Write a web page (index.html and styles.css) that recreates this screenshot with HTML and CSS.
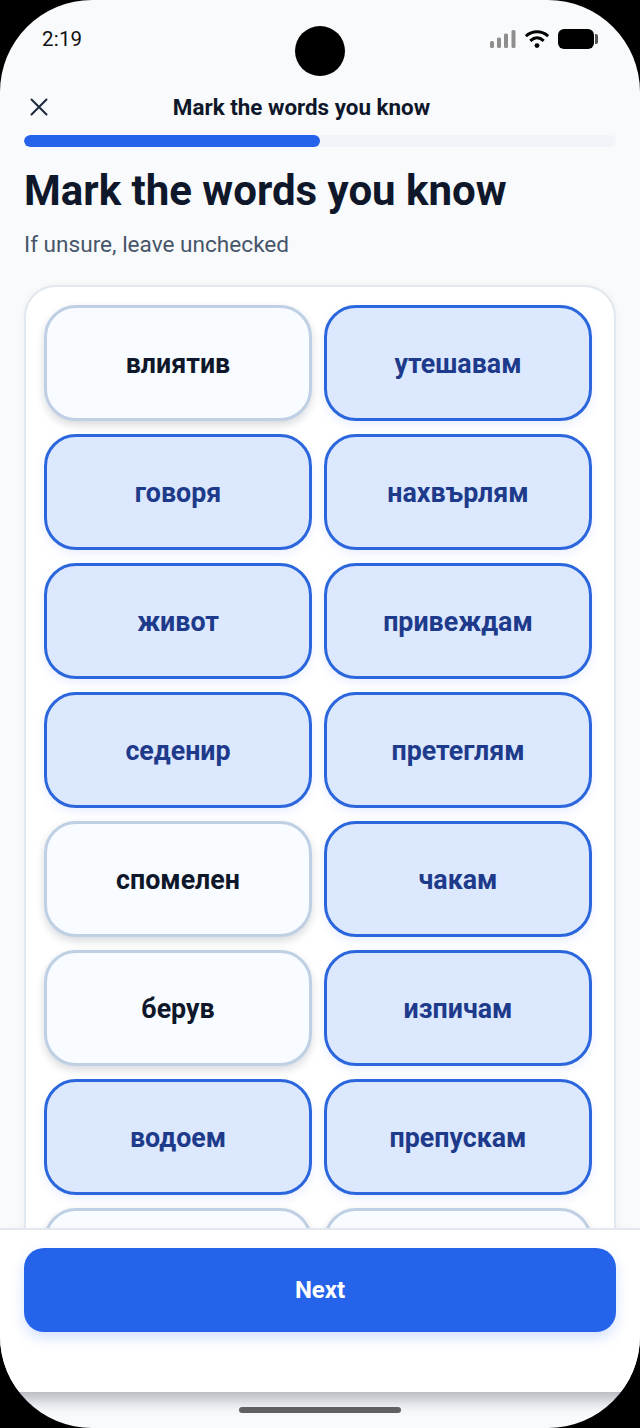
FILE: index.html
```html
<!DOCTYPE html>
<html lang="bg">
<head>
<meta charset="utf-8">
<title>Mark the words you know</title>
<link rel="stylesheet" href="styles.css">
</head>
<body>
<div class="phone">
  <div class="camera"></div>
  <div class="status">
    <span class="time">2:19</span>
    <div class="status-icons">
      <svg class="signal" width="26" height="18" viewBox="0 0 26 18"><rect x="0" y="11" width="4" height="7" rx="1.6"/><rect x="7" y="7.5" width="4" height="10.5" rx="1.6"/><rect x="14" y="3.5" width="4" height="14.5" rx="1.6"/><rect x="21.500" y="0" width="4" height="18" rx="1.6"/></svg>
      <svg class="wifi" width="24" height="18" viewBox="0 0 24 18" fill="none" stroke="#000" stroke-width="3"><path d="M.8 6.200C7.300 .3 16.700 .3 23.200 6.200"/><path d="M5.300 10.800C9.500 7 14.500 7 18.700 10.800"/><circle cx="12" cy="15.600" r="2.400" fill="#000" stroke="none"/></svg>
      <div class="battery"><div class="battery-body"></div><div class="battery-cap"></div></div>
    </div>
  </div>
  <header class="topbar">
    <svg class="close" width="18" height="18" viewBox="0 0 18 18" fill="none" stroke="#1e293b" stroke-width="2" stroke-linecap="round"><path d="M1.500 1.500 16.500 16.500M16.500 1.500 1.500 16.500"/></svg>
    <span class="topbar-title">Mark the words you know</span>
  </header>
  <div class="progress"><div class="progress-fill" style="width:50%"></div></div>
  <main class="content">
    <h1 class="title">Mark the words you know</h1>
    <p class="subtitle">If unsure, leave unchecked</p>
    <section class="card">
      <button class="chip">влиятив</button>
      <button class="chip on">утешавам</button>
      <button class="chip on">говоря</button>
      <button class="chip on">нахвърлям</button>
      <button class="chip on">живот</button>
      <button class="chip on">привеждам</button>
      <button class="chip on">седенир</button>
      <button class="chip on">претеглям</button>
      <button class="chip">спомелен</button>
      <button class="chip on">чакам</button>
      <button class="chip">берув</button>
      <button class="chip on">изпичам</button>
      <button class="chip on">водоем</button>
      <button class="chip on">препускам</button>
      <button class="chip"></button>
      <button class="chip"></button>
    </section>
  </main>
  <footer class="footer"><button class="next">Next</button></footer>
  <div class="home"><div class="home-bar"></div></div>
</div>
</body>
</html>
```
FILE: styles.css
```css
* { box-sizing: border-box; }
html, body { margin: 0; height: 100%; background: #000; }
body { font-family: Roboto, "Noto Sans", sans-serif; color: #0f172a; }
.phone {
  position: relative;
  width: 640px;
  height: 1428px;
  background: #f8fafc;
  border-radius: 92px;
  overflow: hidden;
  display: flex;
  flex-direction: column;
}
.camera {
  position: absolute;
  top: 26px;
  left: 295px;
  width: 50px;
  height: 50px;
  border-radius: 50%;
  background: #000;
}
.status {
  height: 78px;
  flex: none;
  display: flex;
  justify-content: space-between;
  align-items: flex-start;
  padding: 27px 42px 0;
}
.time { font-size: 20.5px; line-height: 24px; color: #111; letter-spacing: .2px; }
.status-icons { display: flex; align-items: center; gap: 9px; margin-top: 2px; }
.signal { fill: #8e8e8e; }
.battery { display: flex; align-items: center; gap: 1px; }
.battery-body { width: 36px; height: 20px; border-radius: 6px; background: #000; }
.battery-cap { width: 3px; height: 10px; border-radius: 0 2px 2px 0; background: #555; }
.topbar {
  position: relative;
  height: 57px;
  flex: none;
  display: flex;
  align-items: center;
  justify-content: center;
}
.close { position: absolute; left: 30px; top: 20px; }
.topbar-title { font-size: 22.4px; font-weight: 700; color: #0f172a; margin: 1px 37px 0 0; }
.progress {
  flex: none;
  height: 12px;
  margin: 0 24px;
  border-radius: 6px;
  background: #f1f5f9;
  overflow: hidden;
}
.progress-fill { height: 100%; border-radius: 6px; background: #2563eb; }
.content {
  flex: 1;
  min-height: 0;
  overflow: hidden;
  padding: 0 24px;
}
.title { margin: 20px 0 0; font-size: 42px; line-height: 48px; font-weight: 700; color: #0f172a; }
.subtitle { margin: 16px 0 0; font-size: 22.6px; line-height: 28px; color: #475569; }
.card {
  margin-top: 26px;
  background: #fff;
  border: 2px solid #e2e8f0;
  border-radius: 32px;
  padding: 18px 22px 20px 18px;
  display: grid;
  grid-template-columns: 268px 268px;
  grid-auto-rows: 116px;
  column-gap: 12px;
  row-gap: 13px;
  box-shadow: 0 2px 8px rgba(15, 23, 42, .06);
}
.chip {
  font-family: Roboto, sans-serif;
  font-size: 26.8px;
  font-weight: 700;
  color: #0f172a;
  background: #f8fbff;
  border: 3px solid #bfd0e4;
  border-radius: 32px;
  box-shadow: 0 4px 8px rgba(15, 23, 42, .16);
  padding: 2px 0 0;
}
.chip.on {
  color: #1e3a8a;
  background: #dbe8fe;
  border-color: #2b66dc;
  box-shadow: 0 4px 10px rgba(37, 99, 235, .1);
}
.footer {
  position: relative;
  flex: none;
  height: 164px;
  padding: 18px 24px 0;
  background: #fff;
  border-top: 2px solid #e2e8f0;
  box-shadow: 0 10px 14px -2px rgba(15, 23, 42, .3);
}
.next {
  width: 100%;
  height: 84px;
  border: 0;
  border-radius: 20px;
  background: #2563eb;
  color: #fff;
  font-family: Roboto, sans-serif;
  font-size: 24px;
  font-weight: 700;
  box-shadow: 0 6px 14px rgba(37, 99, 235, .2);
}
.home {
  flex: none;
  height: 36px;
  padding-top: 15px;
  display: flex;
  justify-content: center;
}
.home-bar { width: 162px; height: 6px; border-radius: 3px; background: #636366; }
```
